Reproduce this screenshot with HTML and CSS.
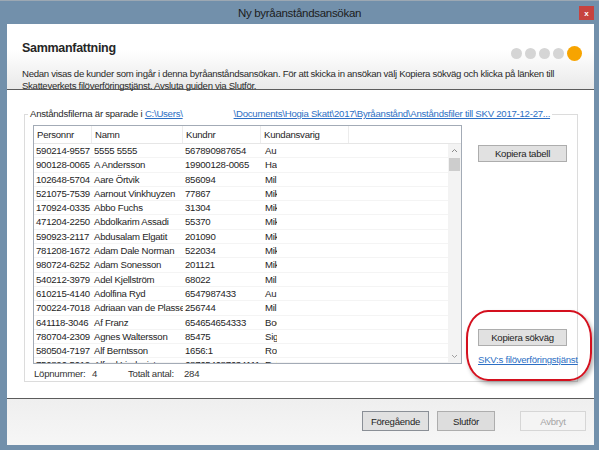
FILE: index.html
```html
<!DOCTYPE html>
<html lang="sv">
<head>
    <meta charset="UTF-8">
    <title>Ny byråanståndsansökan</title>
    <link rel="stylesheet" href="styles.css">
</head>
<body>

    <div class="window">
        <div class="titlebar">
            <span class="title">Ny byråanståndsansökan</span>
            <span class="close">x</span>
        </div>

        <div class="client">
            <!-- Rubrik -->
            <div class="header">
                <div class="header-top">
                    <h1>Sammanfattning</h1>
                    <div class="steps">
                        <span class="dot"></span>
                        <span class="dot"></span>
                        <span class="dot"></span>
                        <span class="dot"></span>
                        <span class="dot current"></span>
                    </div>
                </div>
                <p class="intro">Nedan visas de kunder som ingår i denna byråanståndsansökan. För att skicka in ansökan välj Kopiera sökväg och klicka på länken till<br>Skatteverkets filöverföringstjänst. Avsluta guiden via Slutför.</p>
            </div>

            <!-- Innehåll -->
            <div class="main">
                <fieldset class="files">
                    <legend>Anståndsfilerna är sparade i <a href="#">C:\Users\</a><span class="masked"></span><a href="#">\Documents\Hogia Skatt\2017\Byråanstånd\Anståndsfiler till SKV 2017-12-27...</a></legend>
                    <div class="files-body">
                        <div class="left">
                            <div class="list">
                                <div class="list-head">
                                    <span>Personnr</span>
                                    <span>Namn</span>
                                    <span>Kundnr</span>
                                    <span>Kundansvarig</span>
                                    <span></span>
                                </div>
                                <div class="list-body">
                                    <div class="rows">
                                        <div class="row"><span>590214-9557</span><span>5555 5555</span><span>567890987654</span><span class="cut">Au</span></div>
                                        <div class="row"><span>900128-0065</span><span>A Andersson</span><span>19900128-0065</span><span class="cut">Ha</span></div>
                                        <div class="row"><span>102648-5704</span><span>Aare Örtvik</span><span>856094</span><span class="cut">Mil</span></div>
                                        <div class="row"><span>521075-7539</span><span>Aarnout Vinkhuyzen</span><span>77867</span><span class="cut">Mik</span></div>
                                        <div class="row"><span>170924-0335</span><span>Abbo Fuchs</span><span>31304</span><span class="cut">Mik</span></div>
                                        <div class="row"><span>471204-2250</span><span>Abdolkarim Assadi</span><span>55370</span><span class="cut">Mik</span></div>
                                        <div class="row"><span>590923-2117</span><span>Abdusalam Elgatit</span><span>201090</span><span class="cut">Mik</span></div>
                                        <div class="row"><span>781208-1672</span><span>Adam Dale Norman</span><span>522034</span><span class="cut">Mik</span></div>
                                        <div class="row"><span>980724-6252</span><span>Adam Sonesson</span><span>201121</span><span class="cut">Mik</span></div>
                                        <div class="row"><span>540212-3979</span><span>Adel Kjellström</span><span>68022</span><span class="cut">Mil</span></div>
                                        <div class="row"><span>610215-4140</span><span>Adolfina Ryd</span><span>6547987433</span><span class="cut">Au</span></div>
                                        <div class="row"><span>700224-7018</span><span>Adriaan van de Plasse</span><span>256744</span><span class="cut">Mil</span></div>
                                        <div class="row"><span>641118-3046</span><span>Af Franz</span><span>654654654333</span><span class="cut">Boc</span></div>
                                        <div class="row"><span>780704-2309</span><span>Agnes Waltersson</span><span>85475</span><span class="cut">Sig</span></div>
                                        <div class="row"><span>580504-7197</span><span>Alf Berntsson</span><span>1656:1</span><span class="cut">Rol</span></div>
                                        <div class="row last"><span>750826-5612</span><span>Alfred Lindqvist</span><span>687654687634111</span><span class="cut">Rolf</span></div>
                                    </div>
                                    <div class="vscroll">
                                        <svg width="13" height="13" viewBox="0 0 13 13"><polyline points="4,8 6.5,5.5 9,8" fill="none" stroke="#8a8a8a" stroke-width="1"/></svg>
                                        <div class="thumb"></div>
                                        <svg class="down" width="13" height="13" viewBox="0 0 13 13"><polyline points="4,5 6.5,7.5 9,5" fill="none" stroke="#a0a0a0" stroke-width="1"/></svg>
                                    </div>
                                </div>
                            </div>
                            <div class="status">
                                <span class="lbl">Löpnummer:</span>
                                <span class="val">4</span>
                                <span class="lbl2">Totalt antal:</span>
                                <span>284</span>
                            </div>
                        </div>

                        <div class="actions">
                            <button class="btn">Kopiera tabell</button>
                            <div class="path-actions">
                                <button class="btn">Kopiera sökväg</button>
                                <a href="#" class="skv-link">SKV:s filöverföringstjänst</a>
                            </div>
                        </div>
                    </div>
                </fieldset>
                <div class="highlight"></div>
            </div>

            <!-- Knappar -->
            <div class="footer">
                <button class="btn wizard prev">Föregående</button>
                <button class="btn wizard finish">Slutför</button>
                <button class="btn wizard cancel" disabled>Avbryt</button>
            </div>
        </div>
    </div>

</body>
</html>
```

FILE: styles.css
```css
body {
    margin: 0;
    background-color: #7290ab;
    font-family: "Liberation Sans", Arial, sans-serif;
    color: #1e1e1e;
}

.window {
    width: 599px;
    height: 450px;
    box-sizing: border-box;
    border-top: 1px solid #9ca8b3;
    display: flex;
    flex-direction: column;
}

.titlebar {
    height: 23px;
    position: relative;
    display: flex;
    align-items: center;
    justify-content: center;
}

.title {
    font-size: 11.5px;
    letter-spacing: -0.3px;
    color: #1c1c1c;
}

.close {
    position: absolute;
    right: 5px;
    top: 5px;
    width: 15px;
    height: 14px;
    background-color: #c7433f;
    color: #fff;
    font-size: 8px;
    font-weight: bold;
    display: flex;
    align-items: center;
    justify-content: center;
}

.client {
    flex: 1;
    margin: 0 5px 5px 7px;
    background-color: #fff;
    display: flex;
    flex-direction: column;
}

/* Rubrik */
.header {
    height: 66px;
    box-sizing: border-box;
    padding: 17px 12px 0 15px;
    background: linear-gradient(#ffffff 40%, #e9e9e9);
    border-bottom: 1px solid #5c5c5c;
}

.header-top {
    display: flex;
    justify-content: space-between;
    align-items: flex-start;
}

h1 {
    margin: 0;
    font-size: 12.5px;
    line-height: 15px;
    letter-spacing: -0.3px;
    font-weight: bold;
    color: #262626;
}

.steps {
    display: flex;
    align-items: center;
    gap: 3px;
    height: 15px;
    margin-top: 5px;
}

.dot {
    width: 11px;
    height: 11px;
    border-radius: 50%;
    background-color: #d5d5d5;
}

.dot.current {
    width: 15px;
    height: 15px;
    background-color: #f7a400;
}

.intro {
    margin: 7px 0 0 0;
    font-size: 9.6px;
    line-height: 12px;
    letter-spacing: -0.3px;
    color: #2a2a2a;
}

/* Innehåll */
.main {
    height: 308px;
    position: relative;
}

.files {
    margin: 18px 16px 0 17px;
    padding: 5px 10px 1px 8px;
    border: 1px solid #dcdcdc;
    min-width: 0;
    font-size: 9.6px;
    letter-spacing: -0.25px;
}

.files legend {
    margin-left: -5px;
    padding: 0 2px;
    line-height: 12px;
    white-space: nowrap;
    color: #2a2a2a;
}

.files a {
    color: #2d6fc4;
}

.masked {
    display: inline-block;
    width: 51px;
}

.files-body {
    display: flex;
}

.left {
    width: 429px;
}

.list {
    height: 239px;
    box-sizing: border-box;
    border: 1px solid #a3abb6;
    display: flex;
    flex-direction: column;
}

.list-head {
    height: 17px;
    border-bottom: 1px solid #e6e6e6;
    display: grid;
    grid-template-columns: 58px 91px 78px 88px 1fr;
    align-items: center;
}

.list-head span {
    padding-left: 3px;
    height: 100%;
    line-height: 17px;
    border-right: 1px solid #ececec;
}

.list-head span:last-child {
    border-right: none;
}

.list-body {
    flex: 1;
    display: flex;
    overflow: hidden;
}

.rows {
    flex: 1;
    overflow: hidden;
}

.row {
    height: 14.3px;
    line-height: 14.3px;
    display: grid;
    grid-template-columns: 58px 91px 78px 88px 1fr;
    box-shadow: inset 0 -1px 0 #f4f4f4;
}

.row span {
    padding-left: 2px;
    white-space: nowrap;
    overflow: hidden;
}

.row.last {
    height: 5px;
    line-height: 14.3px;
    overflow: hidden;
}

.row .cut {
    padding-left: 4px;
    width: 12px;
}

.vscroll {
    width: 13px;
    background-color: #f3f3f3;
    display: flex;
    flex-direction: column;
}

.vscroll svg {
    display: block;
}

.thumb {
    margin: 1px 1px 0 1px;
    height: 13px;
    background-color: #cdcdcd;
}

.vscroll .down {
    margin-top: auto;
}

.status {
    display: flex;
    margin-top: 3px;
    padding-left: 1px;
    line-height: 13px;
    color: #333;
}

.status span {
    white-space: nowrap;
}

.status .lbl {
    width: 58px;
}

.status .val {
    width: 36px;
}

.status .lbl2 {
    width: 56px;
}

.actions {
    margin-left: 16px;
    width: 89px;
    display: flex;
    flex-direction: column;
}

.btn {
    font-family: "Liberation Sans", Arial, sans-serif;
    font-size: 9.6px;
    letter-spacing: -0.25px;
    color: #1e1e1e;
    background-color: #e1e1e1;
    border: 1px solid #adadad;
    padding: 0;
    height: 17px;
    width: 89px;
}

.actions > .btn {
    margin-top: 20px;
}

.path-actions {
    margin-top: auto;
    margin-bottom: 14px;
    display: flex;
    flex-direction: column;
}

.skv-link {
    margin-top: 8px;
    white-space: nowrap;
    line-height: 12px;
}

.highlight {
    position: absolute;
    left: 459px;
    top: 220px;
    width: 122px;
    height: 67px;
    border: 2px solid #d4101e;
    border-radius: 22px / 28px;
    box-shadow: 2px 3px 4px rgba(0, 0, 0, 0.3);
}

/* Knappar */
.footer {
    flex: 1;
    border-top: 1px solid #5c5c5c;
    background: linear-gradient(#efefef, #f6f6f6);
    display: flex;
    justify-content: flex-end;
    align-items: flex-start;
    gap: 8px;
    padding: 12px 8px 0 0;
}

.wizard {
    height: 20px;
}

.prev {
    width: 67px;
    border-color: #8a8f96;
}

.finish {
    width: 58px;
    background-color: #dddddd;
}

.cancel {
    width: 66px;
    margin-left: 17px;
    background-color: #f4f4f4;
    border-color: #d6d6d6;
    color: #a6a6a6;
}
```
